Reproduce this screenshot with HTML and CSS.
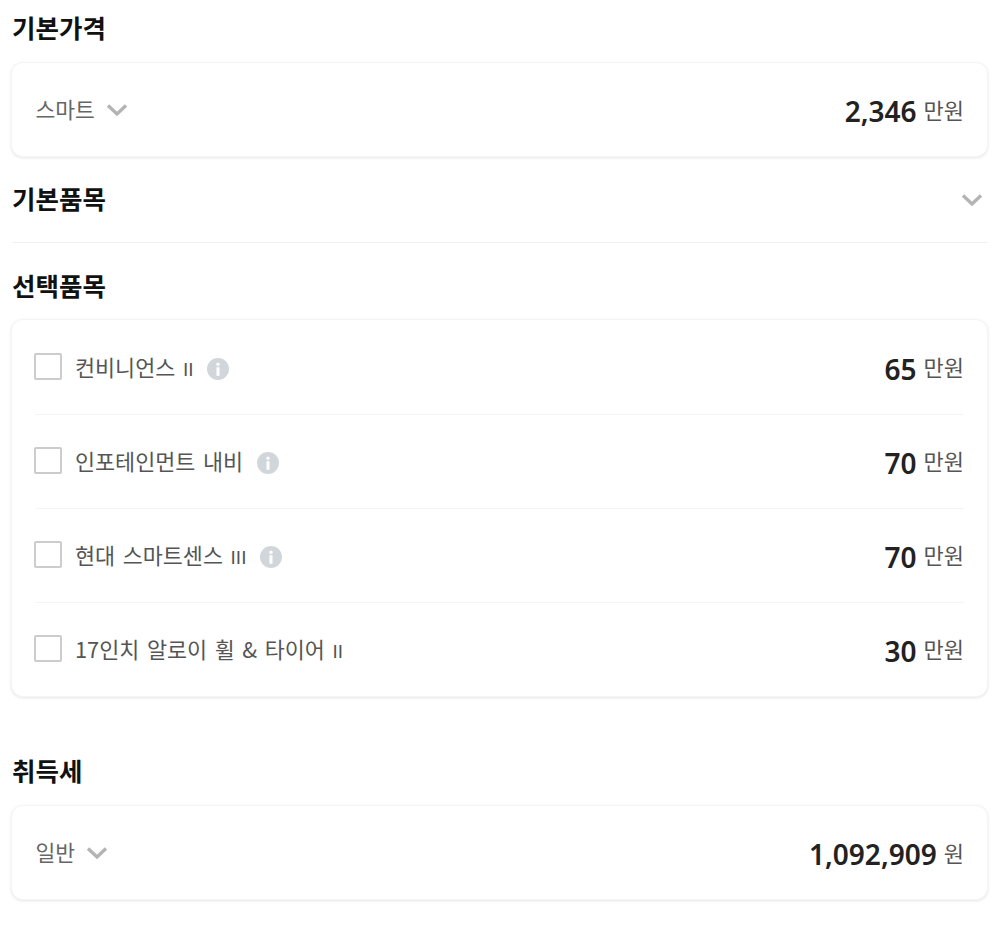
FILE: index.html
```html
<!DOCTYPE html>
<html lang="ko">
<head>
<meta charset="utf-8">
<title>가격</title>
<link rel="stylesheet" href="styles.css">
</head>
<body>
<svg class="defs" width="0" height="0" aria-hidden="true">
  <symbol id="chev" viewBox="0 0 22 14"><path d="M2 2.5 11 11 20 2.5" fill="none" stroke="#b4b4b4" stroke-width="3.4"/></symbol>
  <symbol id="info" viewBox="0 0 22 22"><circle cx="11" cy="11" r="11" fill="#d1d6db"/><circle cx="11" cy="6.2" r="1.7" fill="#fff"/><rect x="9.5" y="9.2" width="3" height="8.6" fill="#fff"/></symbol>
</svg>
<main class="page">
  <h2 class="title first">기본가격</h2>
  <section class="card row-plain">
    <div class="sel"><span>스마트</span><svg class="chev"><use href="#chev"/></svg></div>
    <div class="price"><b>2,346</b><span>만원</span></div>
  </section>

  <div class="fold">
    <h2 class="title">기본품목</h2>
    <svg class="chev end"><use href="#chev"/></svg>
  </div>

  <h2 class="title opt">선택품목</h2>
  <section class="card list">
    <div class="item">
      <div class="label"><i class="box"></i><span class="name">컨비니언스 <span class="rn">II</span></span><svg class="info"><use href="#info"/></svg></div>
      <div class="price"><b>65</b><span>만원</span></div>
    </div>
    <div class="item">
      <div class="label"><i class="box"></i><span class="name">인포테인먼트 내비</span><svg class="info"><use href="#info"/></svg></div>
      <div class="price"><b>70</b><span>만원</span></div>
    </div>
    <div class="item">
      <div class="label"><i class="box"></i><span class="name">현대 스마트센스 <span class="rn">III</span></span><svg class="info"><use href="#info"/></svg></div>
      <div class="price"><b>70</b><span>만원</span></div>
    </div>
    <div class="item">
      <div class="label"><i class="box"></i><span class="name">17인치 알로이 휠 &amp; 타이어 <span class="rn">II</span></span></div>
      <div class="price"><b>30</b><span>만원</span></div>
    </div>
  </section>

  <h2 class="title tax">취득세</h2>
  <section class="card row-plain">
    <div class="sel"><span>일반</span><svg class="chev"><use href="#chev"/></svg></div>
    <div class="price"><b>1,092,909</b><span>원</span></div>
  </section>
</main>
</body>
</html>
```
FILE: styles.css
```css
* { box-sizing: border-box; }
html, body { margin: 0; padding: 0; background: #fff; }
body { font-family: "Noto Sans CJK KR", "Noto Sans", sans-serif; color: #222; }
.defs { position: absolute; }
.page { padding: 0 12px; height: 927px; overflow: hidden; }
.title { margin: 0; font-size: 25.5px; line-height: 36px; font-weight: 700; color: #111; letter-spacing: 0; }
.title.first { padding-top: 9px; height: 62px; }
.card { margin: 0 0 0 -1px; background: #fff; border-radius: 12px; border: 1px solid #f4f5f6; box-shadow: 0 1px 3px rgba(0,0,0,.1); }
.row-plain { height: 95px; padding: 0 23px 0 23.5px; display: flex; align-items: center; justify-content: space-between; }
.sel { display: flex; align-items: center; gap: 11px; font-size: 21.5px; color: #666; line-height: 30px; }
.sel span { margin-bottom: 1px; }
.chev { width: 22px; height: 14px; flex: none; }
.price { display: flex; align-items: baseline; gap: 7px; line-height: 34px; }
.price b { font-family: "Noto Sans", sans-serif; font-weight: 600; font-size: 28px; color: #222; position: relative; top: 2px; }
.price span { font-size: 22px; color: #555; position: relative; top: -1px; }
.item .price span { top: -2px; }
.fold { height: 86px; display: flex; align-items: center; justify-content: space-between; border-bottom: 1px solid #eff0f1; }
.fold .title { margin-bottom: 4px; }
.chev.end { margin-right: 5px; }
.opt { padding-top: 24px; height: 76px; }
.list { padding: 1px 23px 0; height: 378px; }
.item { height: 94px; display: flex; align-items: center; justify-content: space-between; border-bottom: 1px solid #f3f4f5; }
.item:last-child { border-bottom: 0; height: 93px; }
.label { display: flex; align-items: center; font-size: 21.8px; color: #555; line-height: 30px; }
.box { width: 28px; height: 27px; border: 2px solid #ccc; border-radius: 2px; margin: 0 13px 2px -1px; }
.name { margin-bottom: 2px; word-spacing: 1.5px; }
.rn { font-family: "Liberation Sans", sans-serif; font-size: 19px; line-height: 1; }
.info { width: 22px; height: 22px; margin: 2px 0 0 14px; }
.tax { padding-top: 55px; height: 108px; }
```
